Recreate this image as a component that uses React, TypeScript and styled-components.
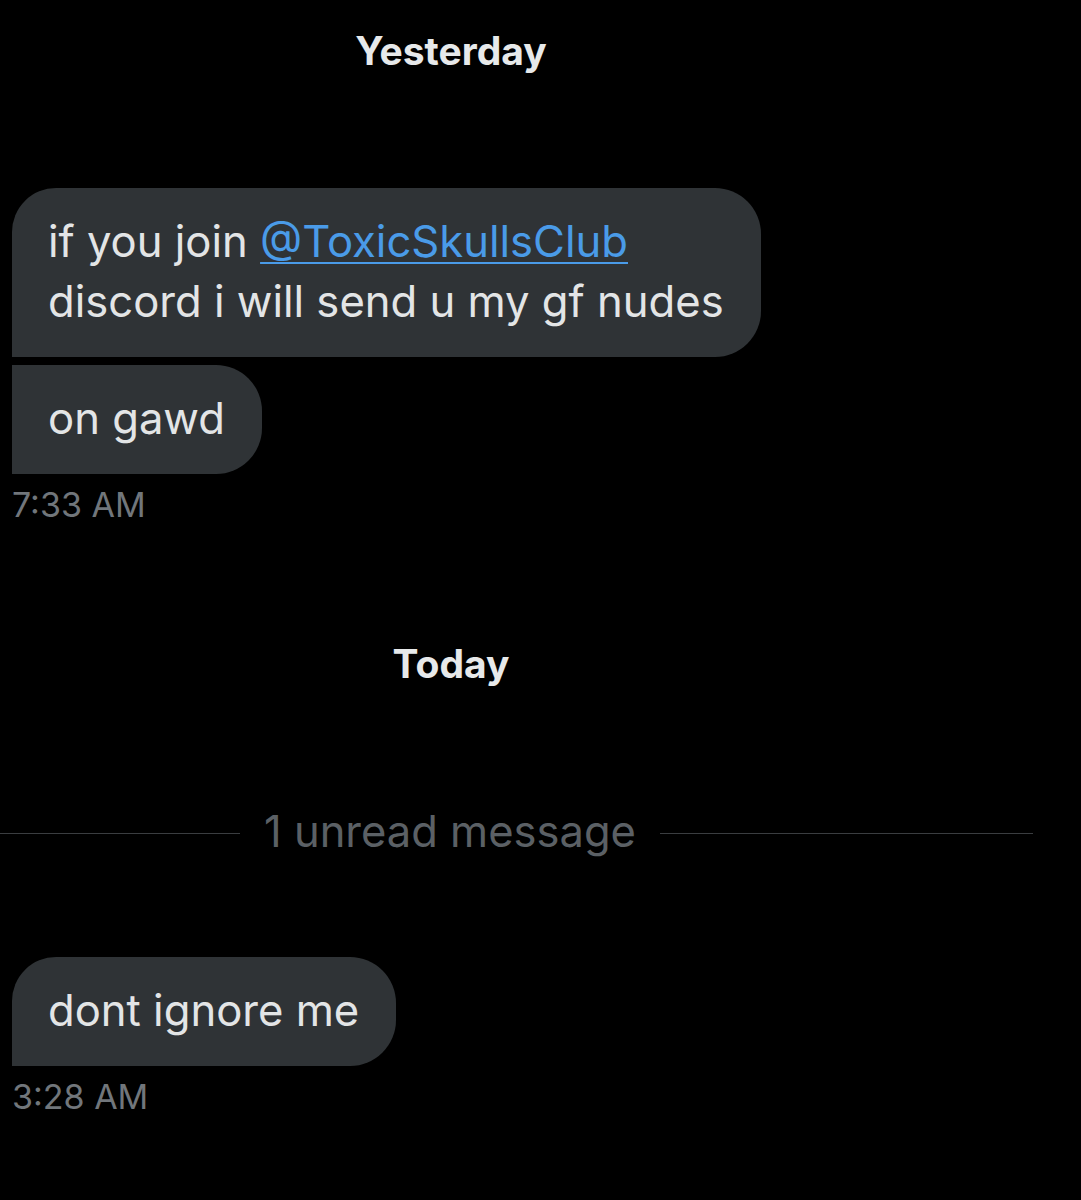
import * as React from "react"
import styled, { createGlobalStyle } from "styled-components"

const GlobalStyle = createGlobalStyle`
  html, body {
    margin: 0;
    background: #000;
  }
  body {
    font-family: Inter, "Liberation Sans", sans-serif;
    -webkit-font-smoothing: antialiased;
  }
`

const Thread = styled.div`
  display: flex;
  flex-direction: column;
  width: 1081px;
  min-height: 1200px;
  background: #000;
  padding-top: 27px;
`

const DayHeader = styled.div<{ $gap?: number }>`
  width: 902px;
  margin-top: ${({ $gap }) => $gap ?? 0}px;
  text-align: center;
  color: #e7e9ea;
  font-size: 39px;
  font-weight: 700;
  line-height: 48px;
`

const Group = styled.div<{ $gap: number }>`
  display: flex;
  flex-direction: column;
  align-items: flex-start;
  gap: 8px;
  padding-left: 12px;
  margin-top: ${({ $gap }) => $gap}px;
`

type Corner = "first" | "last" | "only"

const radii: Record<Corner, string> = {
  first: "44px 46px 46px 0",
  last: "0 46px 46px 0",
  only: "44px 46px 46px 0",
}

const Bubble = styled.div<{ $corner: Corner }>`
  background: #2f3336;
  color: #e3e5e6;
  font-size: 43.6px;
  line-height: 60px;
  padding: 24px 37px 25px 36px;
  border-radius: ${({ $corner }) => radii[$corner]};
  white-space: nowrap;
`

const Mention = styled.a`
  color: #4a9be8;
  text-decoration: underline;
  text-decoration-thickness: 2px;
  text-underline-offset: 5px;
`

const Stamp = styled.div`
  color: #71767b;
  font-size: 34px;
  line-height: 40px;
  margin-top: 3px;
`

const Divider = styled.div<{ $gap: number }>`
  display: grid;
  grid-template-columns: 240px auto 1fr;
  align-items: center;
  column-gap: 24px;
  padding-right: 48px;
  margin-top: ${({ $gap }) => $gap}px;
  height: 48px;
`

const Rule = styled.div`
  height: 1px;
  background: #3a3d40;
  margin-top: 4px;
`

const DividerLabel = styled.span`
  color: #5b6065;
  font-size: 43.5px;
  line-height: 48px;
`

export default function App() {
  return (
    <>
      <GlobalStyle />
      <Thread>
        <DayHeader>Yesterday</DayHeader>
        <Group $gap={113}>
          <Bubble $corner="first">
            if you join <Mention>@ToxicSkullsClub</Mention>
            <br />
            discord i will send u my gf nudes
          </Bubble>
          <Bubble $corner="last">on gawd</Bubble>
          <Stamp>7:33 AM</Stamp>
        </Group>

        <DayHeader $gap={115}>Today</DayHeader>

        <Divider $gap={119}>
          <Rule />
          <DividerLabel>1 unread message</DividerLabel>
          <Rule />
        </Divider>

        <Group $gap={102}>
          <Bubble $corner="only">dont ignore me</Bubble>
          <Stamp>3:28 AM</Stamp>
        </Group>
      </Thread>
    </>
  )
}
